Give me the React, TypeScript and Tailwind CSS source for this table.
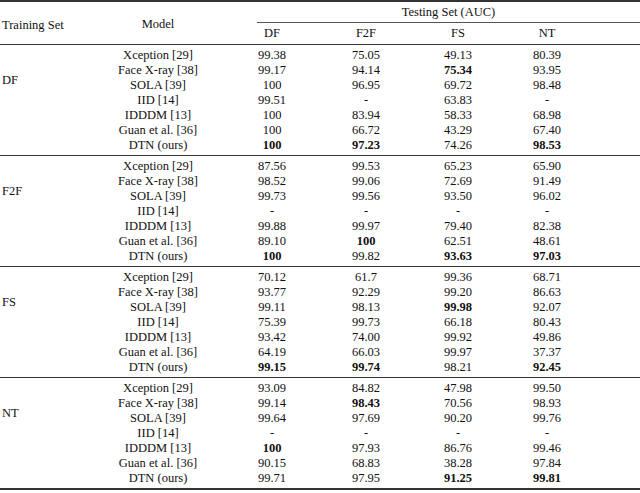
import React from "react";

type Group = { label: string; rows: [string, string[]][] };

const models = [
  "Xception [29]",
  "Face X-ray [38]",
  "SOLA [39]",
  "IID [14]",
  "IDDDM [13]",
  "Guan et al. [36]",
  "DTN (ours)",
];

const raw: Record<string, string[][]> = {
  DF: [
    ["99.38", "75.05", "49.13", "80.39"],
    ["99.17", "94.14", "*75.34", "93.95"],
    ["100", "96.95", "69.72", "98.48"],
    ["99.51", "-", "63.83", "-"],
    ["100", "83.94", "58.33", "68.98"],
    ["100", "66.72", "43.29", "67.40"],
    ["*100", "*97.23", "74.26", "*98.53"],
  ],
  F2F: [
    ["87.56", "99.53", "65.23", "65.90"],
    ["98.52", "99.06", "72.69", "91.49"],
    ["99.73", "99.56", "93.50", "96.02"],
    ["-", "-", "-", "-"],
    ["99.88", "99.97", "79.40", "82.38"],
    ["89.10", "*100", "62.51", "48.61"],
    ["*100", "99.82", "*93.63", "*97.03"],
  ],
  FS: [
    ["70.12", "61.7", "99.36", "68.71"],
    ["93.77", "92.29", "99.20", "86.63"],
    ["99.11", "98.13", "*99.98", "92.07"],
    ["75.39", "99.73", "66.18", "80.43"],
    ["93.42", "74.00", "99.92", "49.86"],
    ["64.19", "66.03", "99.97", "37.37"],
    ["*99.15", "*99.74", "98.21", "*92.45"],
  ],
  NT: [
    ["93.09", "84.82", "47.98", "99.50"],
    ["99.14", "*98.43", "70.56", "98.93"],
    ["99.64", "97.69", "90.20", "99.76"],
    ["-", "-", "-", "-"],
    ["*100", "97.93", "86.76", "99.46"],
    ["90.15", "68.83", "38.28", "97.84"],
    ["99.71", "97.95", "*91.25", "*99.81"],
  ],
};

const groups: Group[] = ["DF", "F2F", "FS", "NT"].map((g) => ({
  label: g,
  rows: models.map((m, i) => [m, raw[g][i]] as [string, string[]]),
}));

const valueCols = ["w-[112px]", "w-[76px]", "w-[108px]", "w-[70px]"];

function Cell({ v, w }: { v: string; w: string }) {
  const bold = v.startsWith("*");
  return (
    <div className={`${w} shrink-0 text-center ${bold ? "font-bold" : ""}`}>
      {bold ? v.slice(1) : v}
    </div>
  );
}

export default function App() {
  return (
    <div className="w-[640px] h-[493px] bg-white text-[#111] text-[12.5px] leading-[15px] overflow-hidden font-['Liberation_Serif','Times_New_Roman',serif]">
      <div className="h-[2px] bg-[#333]" />
      {/* header */}
      <div className="flex h-[42px]">
        <div className="w-[100px] shrink-0 pl-[2px] pt-[16px]">Training Set</div>
        <div className="w-[116px] shrink-0 text-center pt-[15px]">Model</div>
        <div className="flex-1 flex flex-col">
          <div className="ml-[41px] h-[21px] border-b border-[#555] text-center pt-[3px]">
            Testing Set (AUC)
          </div>
          <div className="flex pt-[3px]">
            <div className="w-[112px] shrink-0 text-center">DF</div>
            <div className="w-[76px] shrink-0 text-center">F2F</div>
            <div className="w-[108px] shrink-0 text-center">FS</div>
            <div className="w-[70px] shrink-0 text-center">NT</div>
          </div>
        </div>
      </div>
      {groups.map((g) => (
        <div key={g.label} className="border-t border-[#333]">
          <div className="flex pt-[3px] pb-[2px]">
            <div className="w-[100px] shrink-0 pl-[2px] pt-[25px]">{g.label}</div>
            <div className="flex-1 flex flex-col">
              {g.rows.map(([m, vals]) => (
                <div key={m} className="flex h-[15px]">
                  <div className="w-[116px] shrink-0 text-center">{m}</div>
                  {vals.map((v, i) => (
                    <Cell key={i} v={v} w={valueCols[i]} />
                  ))}
                </div>
              ))}
            </div>
          </div>
        </div>
      ))}
      <div className="h-[2px] bg-[#333]" />
    </div>
  );
}
